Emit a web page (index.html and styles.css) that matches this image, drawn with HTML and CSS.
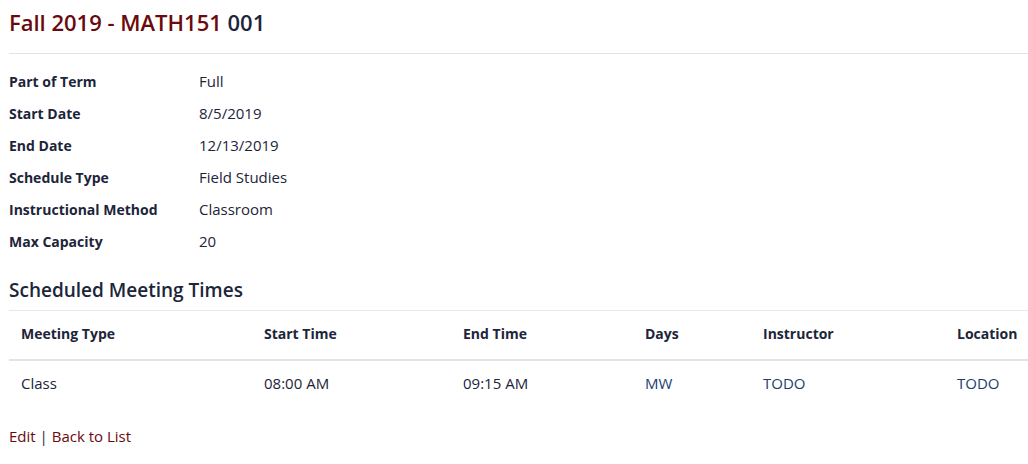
FILE: index.html
```html
<!DOCTYPE html>
<html lang="en">
<head>
<meta charset="utf-8">
<title>Fall 2019 - MATH151 001</title>
<link rel="stylesheet" href="styles.css">
</head>
<body>
<main class="page">
  <h1 class="title"><span class="title-main">Fall 2019 - MATH151</span> <span class="title-sec">001</span></h1>
  <hr class="rule">
  <dl class="details">
    <dt>Part of Term</dt><dd>Full</dd>
    <dt>Start Date</dt><dd>8/5/2019</dd>
    <dt>End Date</dt><dd>12/13/2019</dd>
    <dt>Schedule Type</dt><dd>Field Studies</dd>
    <dt>Instructional Method</dt><dd>Classroom</dd>
    <dt>Max Capacity</dt><dd>20</dd>
  </dl>
  <h2 class="subtitle">Scheduled Meeting Times</h2>
  <table class="meetings">
    <colgroup>
      <col class="c1"><col class="c2"><col class="c3"><col class="c4"><col class="c5"><col class="c6">
    </colgroup>
    <thead>
      <tr><th>Meeting Type</th><th>Start Time</th><th>End Time</th><th>Days</th><th>Instructor</th><th>Location</th></tr>
    </thead>
    <tbody>
      <tr><td>Class</td><td>08:00 AM</td><td>09:15 AM</td><td class="accent">MW</td><td class="accent">TODO</td><td class="accent">TODO</td></tr>
    </tbody>
  </table>
  <p class="actions"><a href="#" class="link">Edit</a> | <a href="#" class="link">Back to List</a></p>
</main>
</body>
</html>
```
FILE: styles.css
```css
html, body {
  margin: 0;
  padding: 0;
  background: #ffffff;
}
body {
  font-family: "Open Sans", "Noto Sans", sans-serif;
  color: #1c2539;
  font-size: 15px;
}
.page {
  padding: 0 0 0 9px;
  width: 1019px;
}
.title {
  margin: 0;
  padding-top: 8px;
  font-size: 22px;
  font-weight: 600;
  line-height: 28px;
}
.title-main { color: #6a0a0d; }
.title-sec { color: #1c2539; }
.rule {
  border: 0;
  border-top: 1px solid #e3e3e3;
  margin: 17px 0 0 0;
  height: 0;
}
.details {
  display: grid;
  grid-template-columns: 190px 1fr;
  grid-auto-rows: 32px;
  margin: 11px 0 0 0;
  align-items: center;
}
.details dt {
  font-weight: 700;
  font-size: 14px;
}
.details dd {
  margin: 0;
}
.subtitle {
  margin: 17px 0 0 0;
  font-size: 19px;
  font-weight: 600;
  line-height: 32px;
}
.meetings {
  width: 100%;
  border-collapse: collapse;
  margin-top: 4px;
  table-layout: fixed;
}
.c1 { width: 243px; }
.c2 { width: 199px; }
.c3 { width: 182px; }
.c4 { width: 118px; }
.c5 { width: 194px; }
.meetings th,
.meetings td {
  text-align: left;
  white-space: nowrap;
  vertical-align: top;
  line-height: 20px;
}
.meetings th {
  font-weight: 700;
  font-size: 14px;
  padding: 13px 12px 15px;
  border-top: 1px solid #e8e8e8;
  border-bottom: 2px solid #e3e3e3;
}
.meetings td {
  padding: 12px 12px 16px;
}
.meetings td.accent { color: #1d3e6e; }
.actions {
  margin: 15px 0 0 0;
  line-height: 24px;
}
.link {
  color: #6a0a0d;
  text-decoration: none;
}
```
